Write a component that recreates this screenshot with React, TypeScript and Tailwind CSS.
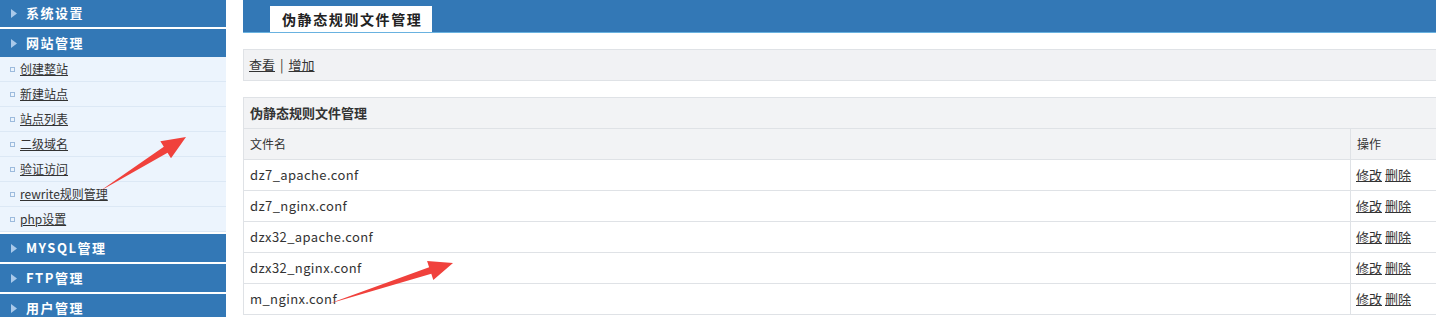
import React from "react";

const groups = ["系统设置", "网站管理"];
const items = ["创建整站", "新建站点", "站点列表", "二级域名", "验证访问", "rewrite规则管理", "php设置"];
const after = ["MYSQL管理", "FTP管理", "用户管理"];
const files = ["dz7_apache.conf", "dz7_nginx.conf", "dzx32_apache.conf", "dzx32_nginx.conf", "m_nginx.conf"];

function GroupHead({ title }: { title: string }) {
  return (
    <div className="flex h-[28px] items-center bg-[#3378b6] mb-[2px]">
      <svg width="6" height="9" viewBox="0 0 6 9" className="ml-[11px] mr-[9px]">
        <path d="M0 0 L6 4.5 L0 9 Z" fill="#a9c9ea" />
      </svg>
      <span className="text-[13px] font-bold text-white tracking-[1.5px]">{title}</span>
    </div>
  );
}

function Arrow({ x1, y1, x2, y2 }: { x1: number; y1: number; x2: number; y2: number }) {
  const ang = Math.atan2(y2 - y1, x2 - x1);
  const len = 24;
  const w = 10;
  const bx = x2 - Math.cos(ang) * len;
  const by = y2 - Math.sin(ang) * len;
  const px = -Math.sin(ang);
  const py = Math.cos(ang);
  const pts = `${x2},${y2} ${bx + px * w},${by + py * w} ${bx + px * 3.5},${by + py * 3.5} ${x1},${y1} ${bx - px * 3.5},${by - py * 3.5} ${bx - px * w},${by - py * w}`;
  return <polygon points={pts} fill="#f0413c" />;
}

export default function App() {
  return (
    <div className="relative flex h-[317px] w-[1436px] overflow-hidden bg-white text-[#333] font-['Noto_Sans_CJK_SC',sans-serif]">
      {/* Sidebar */}
      <div className="w-[226px] shrink-0 -mt-[1px]">
        {groups.map((g) => (
          <GroupHead key={g} title={g} />
        ))}
        <div className="-mt-[2px] mb-[2px]">
          {items.map((it) => (
            <div key={it} className="flex h-[25px] items-center bg-[#ecf4fd] border-b border-[#dce8f5]">
              <span className="ml-[10px] mr-[5px] h-[5px] w-[5px] border border-[#9dbbdd]" />
              <a className="text-[12px] underline text-[#333]">{it}</a>
            </div>
          ))}
        </div>
        {after.map((g) => (
          <GroupHead key={g} title={g} />
        ))}
      </div>

      {/* Main */}
      <div className="ml-[17px] flex-1">
        <div className="h-[33px] bg-[#3378b6] border-b border-[#69b2e0] flex items-end pl-[27px]">
          <div className="h-[26px] bg-white pl-[12px] pr-[10px] flex items-center text-[14px] font-bold tracking-[1.6px] text-[#222]">
            伪静态规则文件管理
          </div>
        </div>

        <div className="mt-[16px] h-[32px] bg-[#f1f2f4] border border-r-0 border-[#dfe2e6] flex items-center pl-[5px] text-[13px]">
          <a className="underline">查看</a>
          <span className="mx-[5px]">|</span>
          <a className="underline">增加</a>
        </div>

        <div className="mt-[16px] border-l border-[#dfe2e6]">
          <div className="h-[32px] bg-[#f2f3f5] border-t border-b border-[#dfe2e6] flex items-center pl-[6px] text-[13px] font-bold">
            伪静态规则文件管理
          </div>
          <div className="flex h-[31px] bg-[#f2f3f5] border-b border-[#dfe2e6] text-[12px]">
            <div className="w-[1107px] flex items-center pl-[6px] border-r border-[#dfe2e6]">文件名</div>
            <div className="flex items-center pl-[6px]">操作</div>
          </div>
          {files.map((f) => (
            <div key={f} className="flex h-[31px] border-b border-[#dfe2e6] text-[13px]">
              <div className="w-[1107px] flex items-center pl-[6px] border-r border-[#dfe2e6] tracking-[0.4px]">{f}</div>
              <div className="flex items-center pl-[5px] text-[13px] gap-[3px]">
                <a className="underline">修改</a>
                <a className="underline">删除</a>
              </div>
            </div>
          ))}
        </div>
      </div>

      {/* annotation arrows */}
      <svg className="absolute left-0 top-0 pointer-events-none" width="1436" height="317">
        <Arrow x1={100} y1={191} x2={186} y2={137} />
        <Arrow x1={328} y1={304} x2={453} y2={263} />
      </svg>
    </div>
  );
}
